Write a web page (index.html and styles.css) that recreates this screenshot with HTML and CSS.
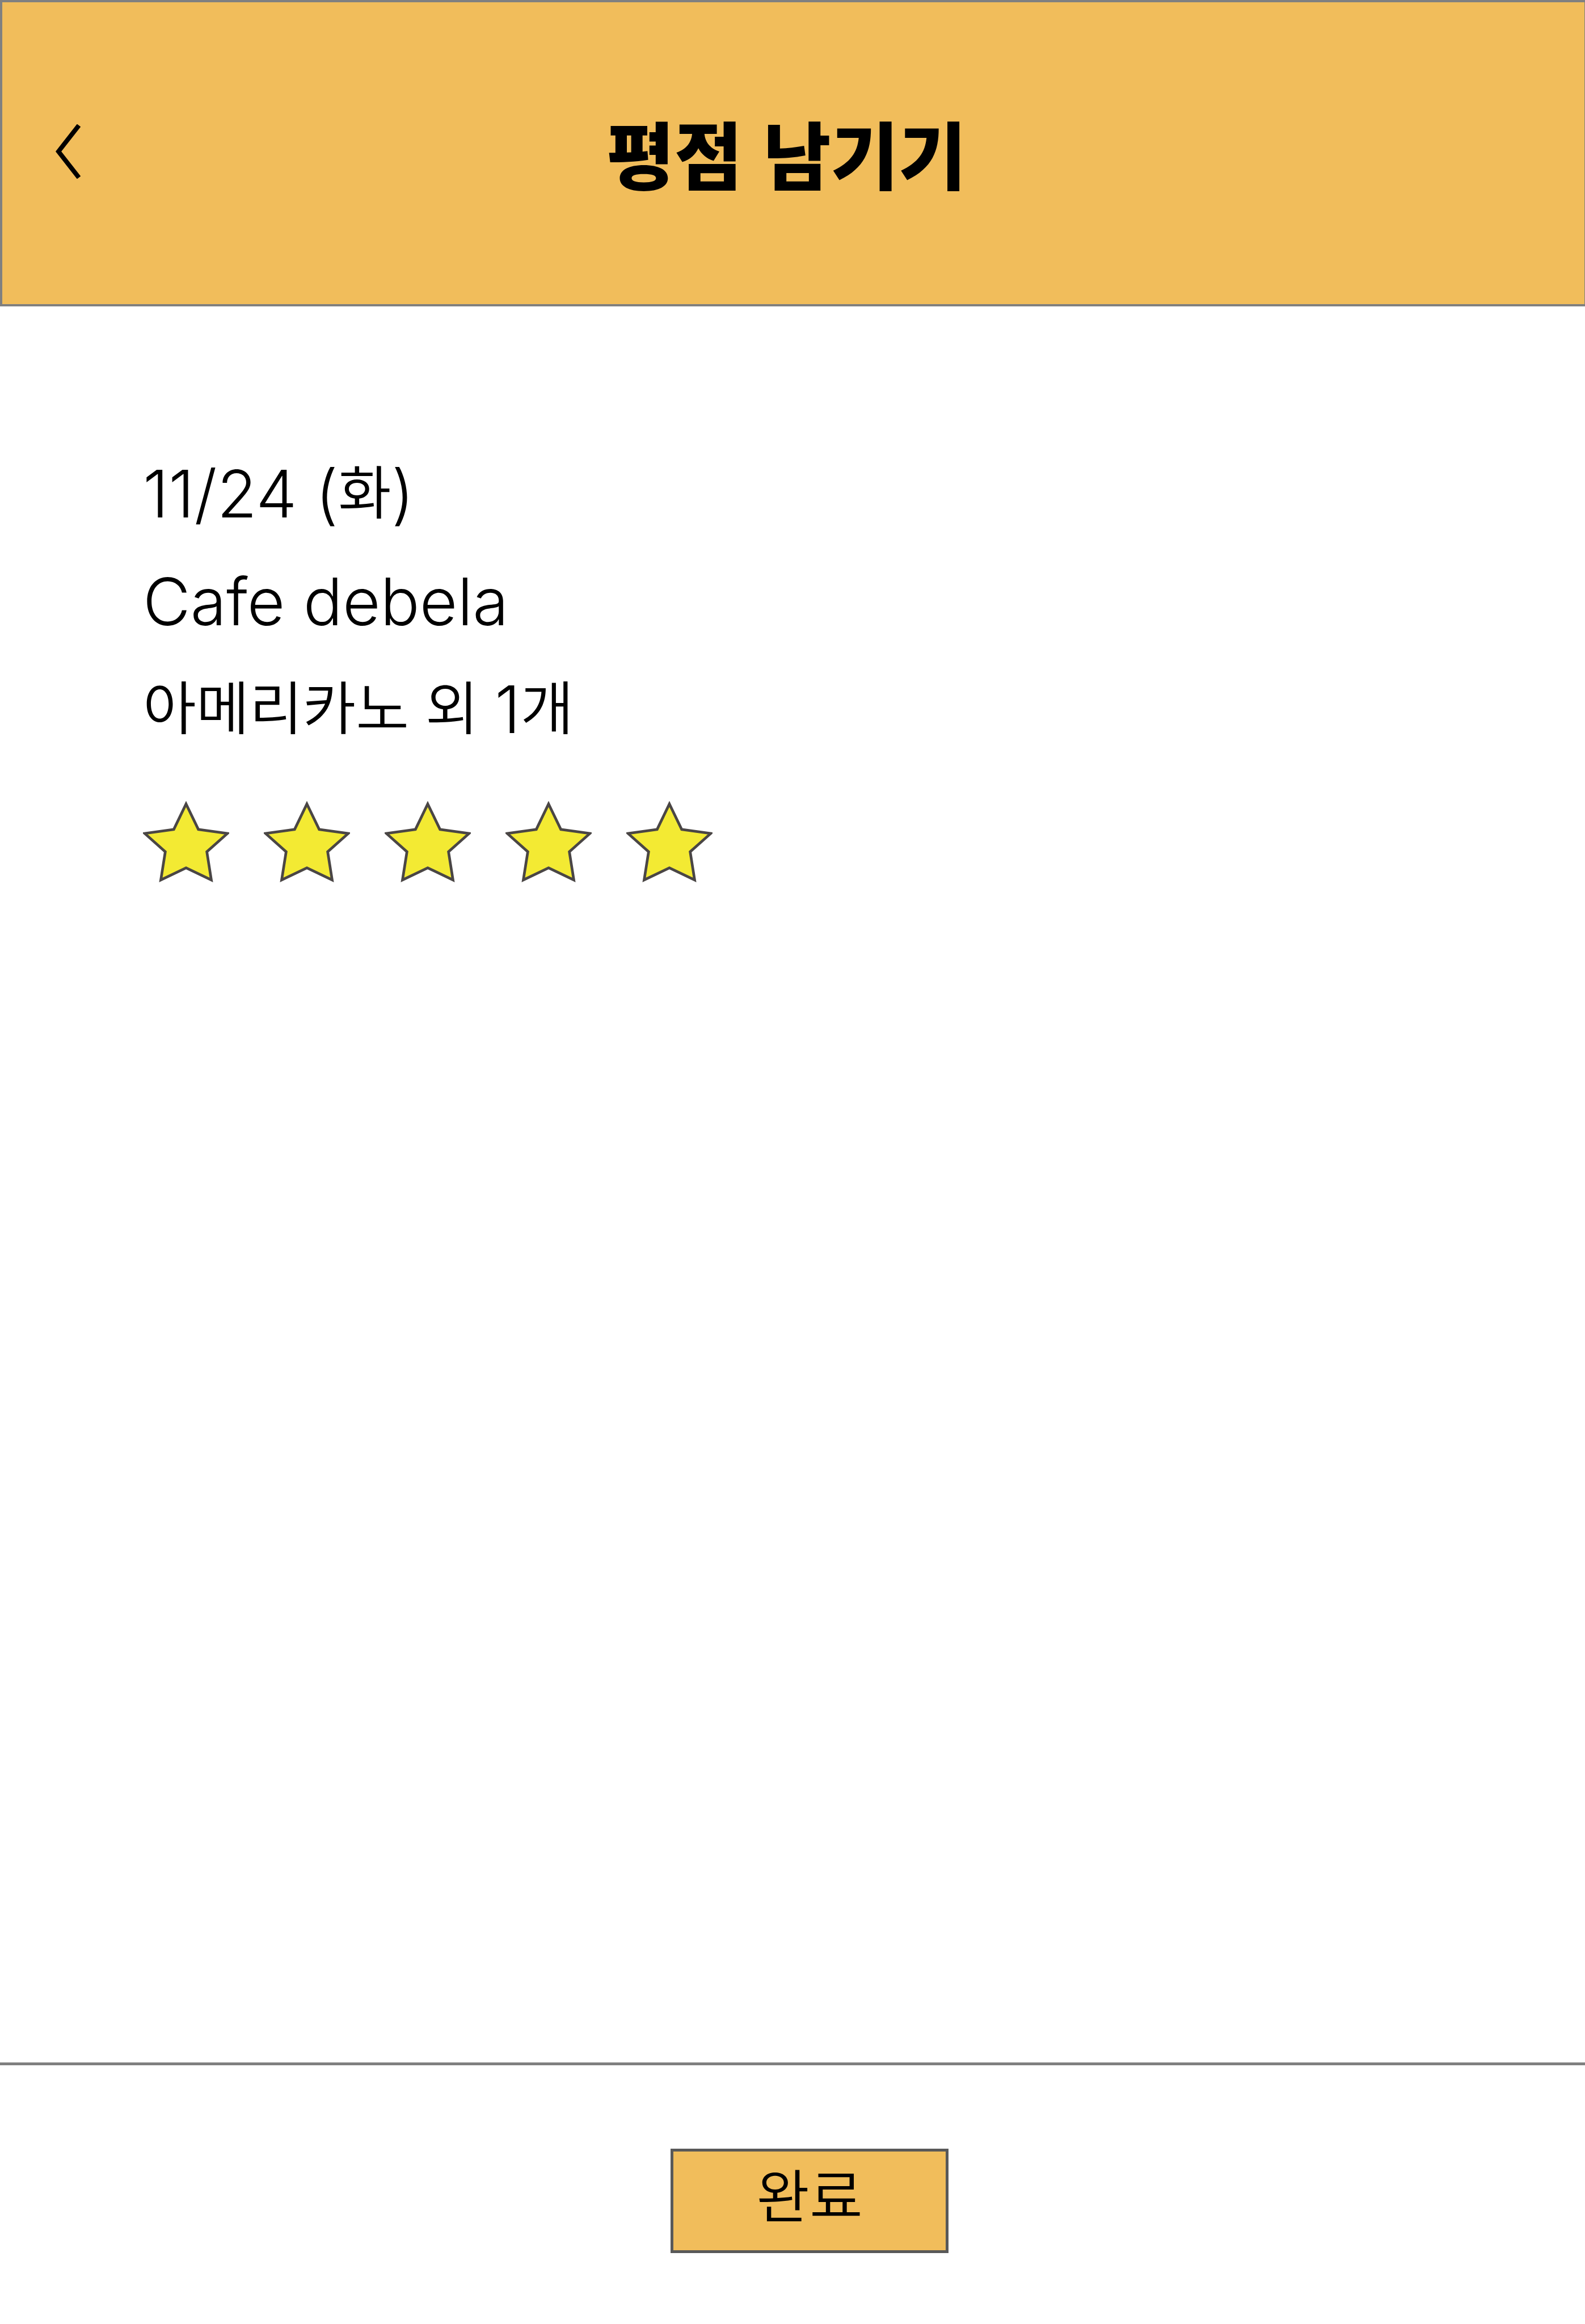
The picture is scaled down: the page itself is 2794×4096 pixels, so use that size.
FILE: index.html
```html
<!DOCTYPE html>
<html lang="ko">
<head>
<meta charset="utf-8">
<meta name="viewport" content="width=device-width, initial-scale=1">
<title>평점 남기기</title>
<link rel="stylesheet" href="styles.css">
</head>
<body>
<svg class="sprite" aria-hidden="true">
  <symbol id="star" viewBox="0 0 193 181">
    <path d="M96.500 6L124 63L189 72L143 113L153 176L96.500 149L40 176L50 113L4 72L69 63Z"/>
  </symbol>
</svg>
<header class="topbar">
  <a class="back" href="#" aria-label="뒤로">
    <svg class="back-icon" viewBox="0 0 44 96" aria-hidden="true"><path d="M41 2L5 48L41 94"/></svg>
  </a>
  <h1 class="title">평점 남기기</h1>
</header>
<main class="review">
  <p class="line">11/24 (<span class="hangul">화</span>)</p>
  <p class="line">Cafe debela</p>
  <p class="line"><span class="hangul">아메리카노 외 </span>1<span class="hangul">개</span></p>
  <fieldset class="rating" aria-label="평점">
    <label class="star"><input type="radio" name="rating" value="1" aria-label="1점"><svg class="star-icon" aria-hidden="true"><use href="#star"/></svg></label>
    <label class="star"><input type="radio" name="rating" value="2" aria-label="2점"><svg class="star-icon" aria-hidden="true"><use href="#star"/></svg></label>
    <label class="star"><input type="radio" name="rating" value="3" aria-label="3점"><svg class="star-icon" aria-hidden="true"><use href="#star"/></svg></label>
    <label class="star"><input type="radio" name="rating" value="4" aria-label="4점"><svg class="star-icon" aria-hidden="true"><use href="#star"/></svg></label>
    <label class="star"><input type="radio" name="rating" value="5" aria-label="5점" checked><svg class="star-icon" aria-hidden="true"><use href="#star"/></svg></label>
  </fieldset>
</main>
<footer class="actions">
  <button class="done" type="button">완료</button>
</footer>
</body>
</html>
```
FILE: styles.css
```css
* {
  box-sizing: border-box;
}

body {
  display: flex;
  flex-direction: column;
  min-height: 100vh;
  margin: 0;
  background: #fff;
  color: #000;
  font-family: Inter, "Noto Sans CJK KR", sans-serif;
  font-weight: 300;
}

.sprite {
  display: none;
}

.topbar {
  display: grid;
  grid-template-columns: 240px 1fr 264px;
  align-items: center;
  padding: 158px 0 164px;
  border: 4px solid #808080;
  border-right-width: 1px;
  background: #f1bd5b;
}

.back {
  justify-self: start;
  margin-left: 94px;
  color: #000;
}

.back-icon {
  display: block;
  width: 44px;
  height: 96px;
  fill: none;
  stroke: currentColor;
  stroke-width: 8px;
}

.title {
  margin: 0;
  font-family: "Noto Sans CJK KR", sans-serif;
  font-size: 130px;
  font-weight: 900;
  line-height: 210px;
  text-align: center;
}

.review {
  flex: 1;
  padding: 236px 252px;
}

.line {
  margin: 0;
  font-size: 115px;
  line-height: 190px;
}

.hangul {
  font-family: "Noto Sans CJK KR", sans-serif;
  font-size: 102px;
  font-weight: 350;
  line-height: 1;
  vertical-align: 6px;
}

.rating {
  display: flex;
  gap: 61px;
  margin: 66px 0 0;
  padding: 0;
  border: 0;
}

.star {
  position: relative;
  cursor: pointer;
}

.star input {
  position: absolute;
  inset: 0;
  margin: 0;
  opacity: 0;
}

.star-icon {
  display: block;
  width: 152px;
  height: 143px;
  overflow: visible;
  fill: #f3ea33;
  stroke: #4a4645;
  stroke-width: 6px;
}

.actions {
  display: flex;
  justify-content: center;
  padding: 147px 0 125px 60px;
  border-top: 5px solid #808080;
}

.done {
  width: 490px;
  padding: 0 0 28px;
  border: 5px solid #595959;
  border-radius: 0;
  background: #f1bd5b;
  color: #000;
  font-family: "Noto Sans CJK KR", sans-serif;
  font-size: 102px;
  font-weight: 350;
  line-height: 146px;
}
```
